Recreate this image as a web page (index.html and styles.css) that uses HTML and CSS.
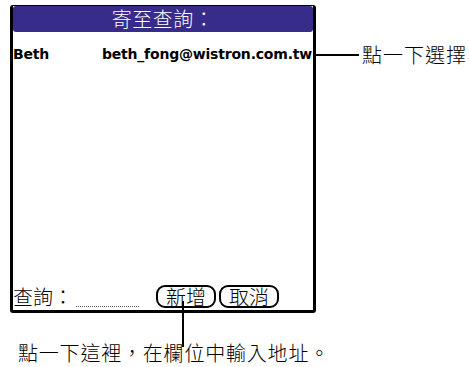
FILE: index.html
```html
<html>
<head>
	<title>寄至查詢</title>
	<meta charset="UTF-8">
	<link rel="stylesheet" href="styles.css">
</head>
<body>
	<div class="page">
		<div class="top">
			<div class="device">
				<div class="title">寄至查詢：</div>
				<div class="list">
					<div class="row">
						<span class="name">Beth</span>
						<span class="mail">beth_fong@wistron.com.tw</span>
					</div>
				</div>
				<div class="bar">
					<span class="label">查詢：</span>
					<span class="field"></span>
					<button class="btn btn-add">新增</button>
					<button class="btn">取消</button>
				</div>
			</div>
			<div class="callout">
				<span class="lead"></span>
				<span class="note">點一下選擇</span>
			</div>
		</div>
		<p class="bottom-note">點一下這裡，在欄位中輸入地址。</p>
	</div>
</body>
</html>
```

FILE: styles.css
```css
*{
	margin: 0;
	padding: 0;
}
body{
	background: #fff;
	color: #000;
	font-family: "Noto Sans CJK TC", "Noto Sans", sans-serif;
	font-weight: 300;
}
.page{
	padding: 5px 0 0 10px;
}
.top{
	display: flex;
	align-items: flex-start;
}
.device{
	width: 306px;
	height: 308px;
	box-sizing: border-box;
	border: 2px solid #000;
	border-width: 1px 3px 3px 3px;
	border-radius: 3px;
	display: flex;
	flex-direction: column;
}
.title{
	height: 26px;
	background: #382c8a;
	border-radius: 3px;
	color: #fff;
	text-align: center;
	font-size: 20px;
	line-height: 26px;
	letter-spacing: 0.5px;
}
.list{
	flex: 1;
	padding-top: 13px;
}
.row{
	display: flex;
	justify-content: space-between;
	font-family: "DejaVu Sans", sans-serif;
	font-weight: bold;
	font-size: 14px;
	letter-spacing: -0.2px;
	line-height: 18px;
	padding-right: 1px;
}
.bar{
	display: flex;
	align-items: flex-end;
	height: 26px;
	padding-bottom: 2px;
}
.label{
	font-size: 20px;
	line-height: 22px;
	width: 63px;
}
.field{
	width: 63px;
	margin-bottom: 1px;
	border-bottom: 1px dotted #555;
	margin-right: 17px;
}
.btn{
	position: relative;
	height: 23px;
	padding: 0 8px;
	margin-right: 3px;
	background: #fff;
	border: 2px solid #000;
	border-radius: 9px;
	font-family: "Noto Sans CJK TC", sans-serif;
	font-weight: 300;
	font-size: 20px;
	line-height: 18px;
}
.btn-add::after{
	content: "";
	position: absolute;
	left: 24px;
	top: 14px;
	width: 2px;
	height: 46px;
	background: #000;
}
.callout{
	display: flex;
	align-items: center;
	margin-top: 38px;
	height: 24px;
}
.lead{
	width: 43px;
	height: 2px;
	background: #000;
	margin-right: 3px;
}
.note{
	font-size: 20px;
	line-height: 24px;
	letter-spacing: 1px;
}
.bottom-note{
	margin: 28px 0 0 8px;
	font-size: 20px;
	line-height: 24px;
	letter-spacing: 0.8px;
}
```
